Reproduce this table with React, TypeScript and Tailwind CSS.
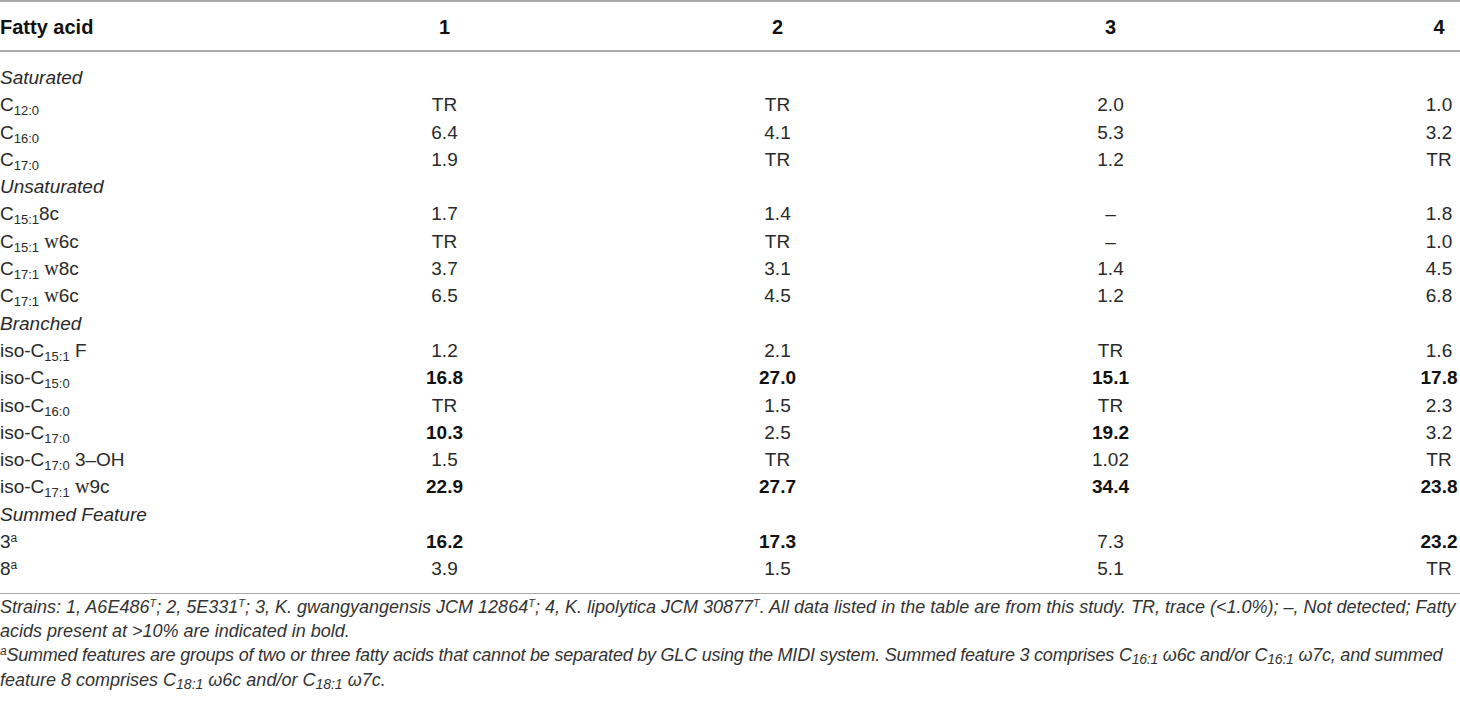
import React from "react"

type Row =
    | { group: string }
    | { label: React.ReactNode; values: string[] }

const Sub = ({ children }: { children: React.ReactNode }) => (
    <span className="relative top-[4px] text-[13px]">{children}</span>
)

const W = () => <span className="font-['Liberation_Serif'] text-[20px]">w</span>

const rows: Row[] = [
    { group: "Saturated" },
    { label: <>C<Sub>12:0</Sub></>, values: ["TR", "TR", "2.0", "1.0"] },
    { label: <>C<Sub>16:0</Sub></>, values: ["6.4", "4.1", "5.3", "3.2"] },
    { label: <>C<Sub>17:0</Sub></>, values: ["1.9", "TR", "1.2", "TR"] },
    { group: "Unsaturated" },
    { label: <>C<Sub>15:1</Sub>8c</>, values: ["1.7", "1.4", "–", "1.8"] },
    { label: <>C<Sub>15:1</Sub> <W />6c</>, values: ["TR", "TR", "–", "1.0"] },
    { label: <>C<Sub>17:1</Sub> <W />8c</>, values: ["3.7", "3.1", "1.4", "4.5"] },
    { label: <>C<Sub>17:1</Sub> <W />6c</>, values: ["6.5", "4.5", "1.2", "6.8"] },
    { group: "Branched" },
    { label: <>iso-C<Sub>15:1</Sub> F</>, values: ["1.2", "2.1", "TR", "1.6"] },
    { label: <>iso-C<Sub>15:0</Sub></>, values: ["*16.8", "*27.0", "*15.1", "*17.8"] },
    { label: <>iso-C<Sub>16:0</Sub></>, values: ["TR", "1.5", "TR", "2.3"] },
    { label: <>iso-C<Sub>17:0</Sub></>, values: ["*10.3", "2.5", "*19.2", "3.2"] },
    { label: <>iso-C<Sub>17:0</Sub> 3–OH</>, values: ["1.5", "TR", "1.02", "TR"] },
    { label: <>iso-C<Sub>17:1</Sub> <W />9c</>, values: ["*22.9", "*27.7", "*34.4", "*23.8"] },
    { group: "Summed Feature" },
    { label: <>3<sup className="text-[12px]">a</sup></>, values: ["*16.2", "*17.3", "7.3", "*23.2"] },
    { label: <>8<sup className="text-[12px]">a</sup></>, values: ["3.9", "1.5", "5.1", "TR"] },
]

const Cell = ({ value, last }: { value: string; last?: boolean }) => {
    const bold = value.startsWith("*")
    const text = bold ? value.slice(1) : value
    if (last) {
        return (
            <div className="flex justify-end">
                <span className={`w-[42px] text-center ${bold ? "font-bold text-[#111]" : ""}`}>{text}</span>
            </div>
        )
    }
    return <div className={`text-center ${bold ? "font-bold text-[#111]" : ""}`}>{text}</div>
}

const T = () => <sup className="text-[11px]">T</sup>
const Ws = ({ children }: { children: React.ReactNode }) => (
    <span className="relative top-[3px] text-[14px]">{children}</span>
)

export default function App() {
    return (
        <div className="w-[1460px] h-[703px] bg-white font-['Liberation_Sans',sans-serif] text-[19px] text-[#2a2a2a] overflow-hidden">
            {/* header */}
            <div className="border-t-2 border-[#a9a9a9] grid grid-cols-[278px_333px_333px_333px_1fr] items-center h-[50px] pt-[2px] font-bold text-[20px] text-[#111]">
                <div>Fatty acid</div>
                <div className="text-center">1</div>
                <div className="text-center">2</div>
                <div className="text-center">3</div>
                <div className="flex justify-end">
                    <span className="w-[42px] text-center">4</span>
                </div>
            </div>

            {/* body */}
            <div className="border-t-2 border-[#a9a9a9] pt-[12px] pb-[10px]">
                {rows.map((row, i) =>
                    "group" in row ? (
                        <div key={i} className="h-[27.3px] leading-[27.3px] italic">{row.group}</div>
                    ) : (
                        <div key={i} className="grid grid-cols-[278px_333px_333px_333px_1fr] h-[27.3px] leading-[27.3px]">
                            <div className="whitespace-nowrap">{row.label}</div>
                            <Cell value={row.values[0]} />
                            <Cell value={row.values[1]} />
                            <Cell value={row.values[2]} />
                            <Cell value={row.values[3]} last />
                        </div>
                    )
                )}
            </div>

            {/* footnotes */}
            <div className="border-t border-[#a9a9a9] pt-[1px] italic text-[18px] leading-[24px] text-[#333]">
                <div className="whitespace-nowrap">
                    Strains: 1, A6E486<T />; 2, 5E331<T />; 3, K. gwangyangensis JCM 12864<T />; 4, K. lipolytica JCM 30877<T />. All data listed in the table are from this study. TR, trace (&lt;1.0%); –, Not detected; Fatty
                </div>
                <div className="whitespace-nowrap">acids present at &gt;10% are indicated in bold.</div>
                <div className="whitespace-nowrap tracking-[-0.22px]">
                    <sup className="text-[12px]">a</sup>Summed features are groups of two or three fatty acids that cannot be separated by GLC using the MIDI system. Summed feature 3 comprises C<Ws>16:1</Ws> ω6c and/or C<Ws>16:1</Ws> ω7c, and summed
                </div>
                <div className="whitespace-nowrap">
                    feature 8 comprises C<Ws>18:1</Ws> ω6c and/or C<Ws>18:1</Ws> ω7c.
                </div>
            </div>
        </div>
    )
}
